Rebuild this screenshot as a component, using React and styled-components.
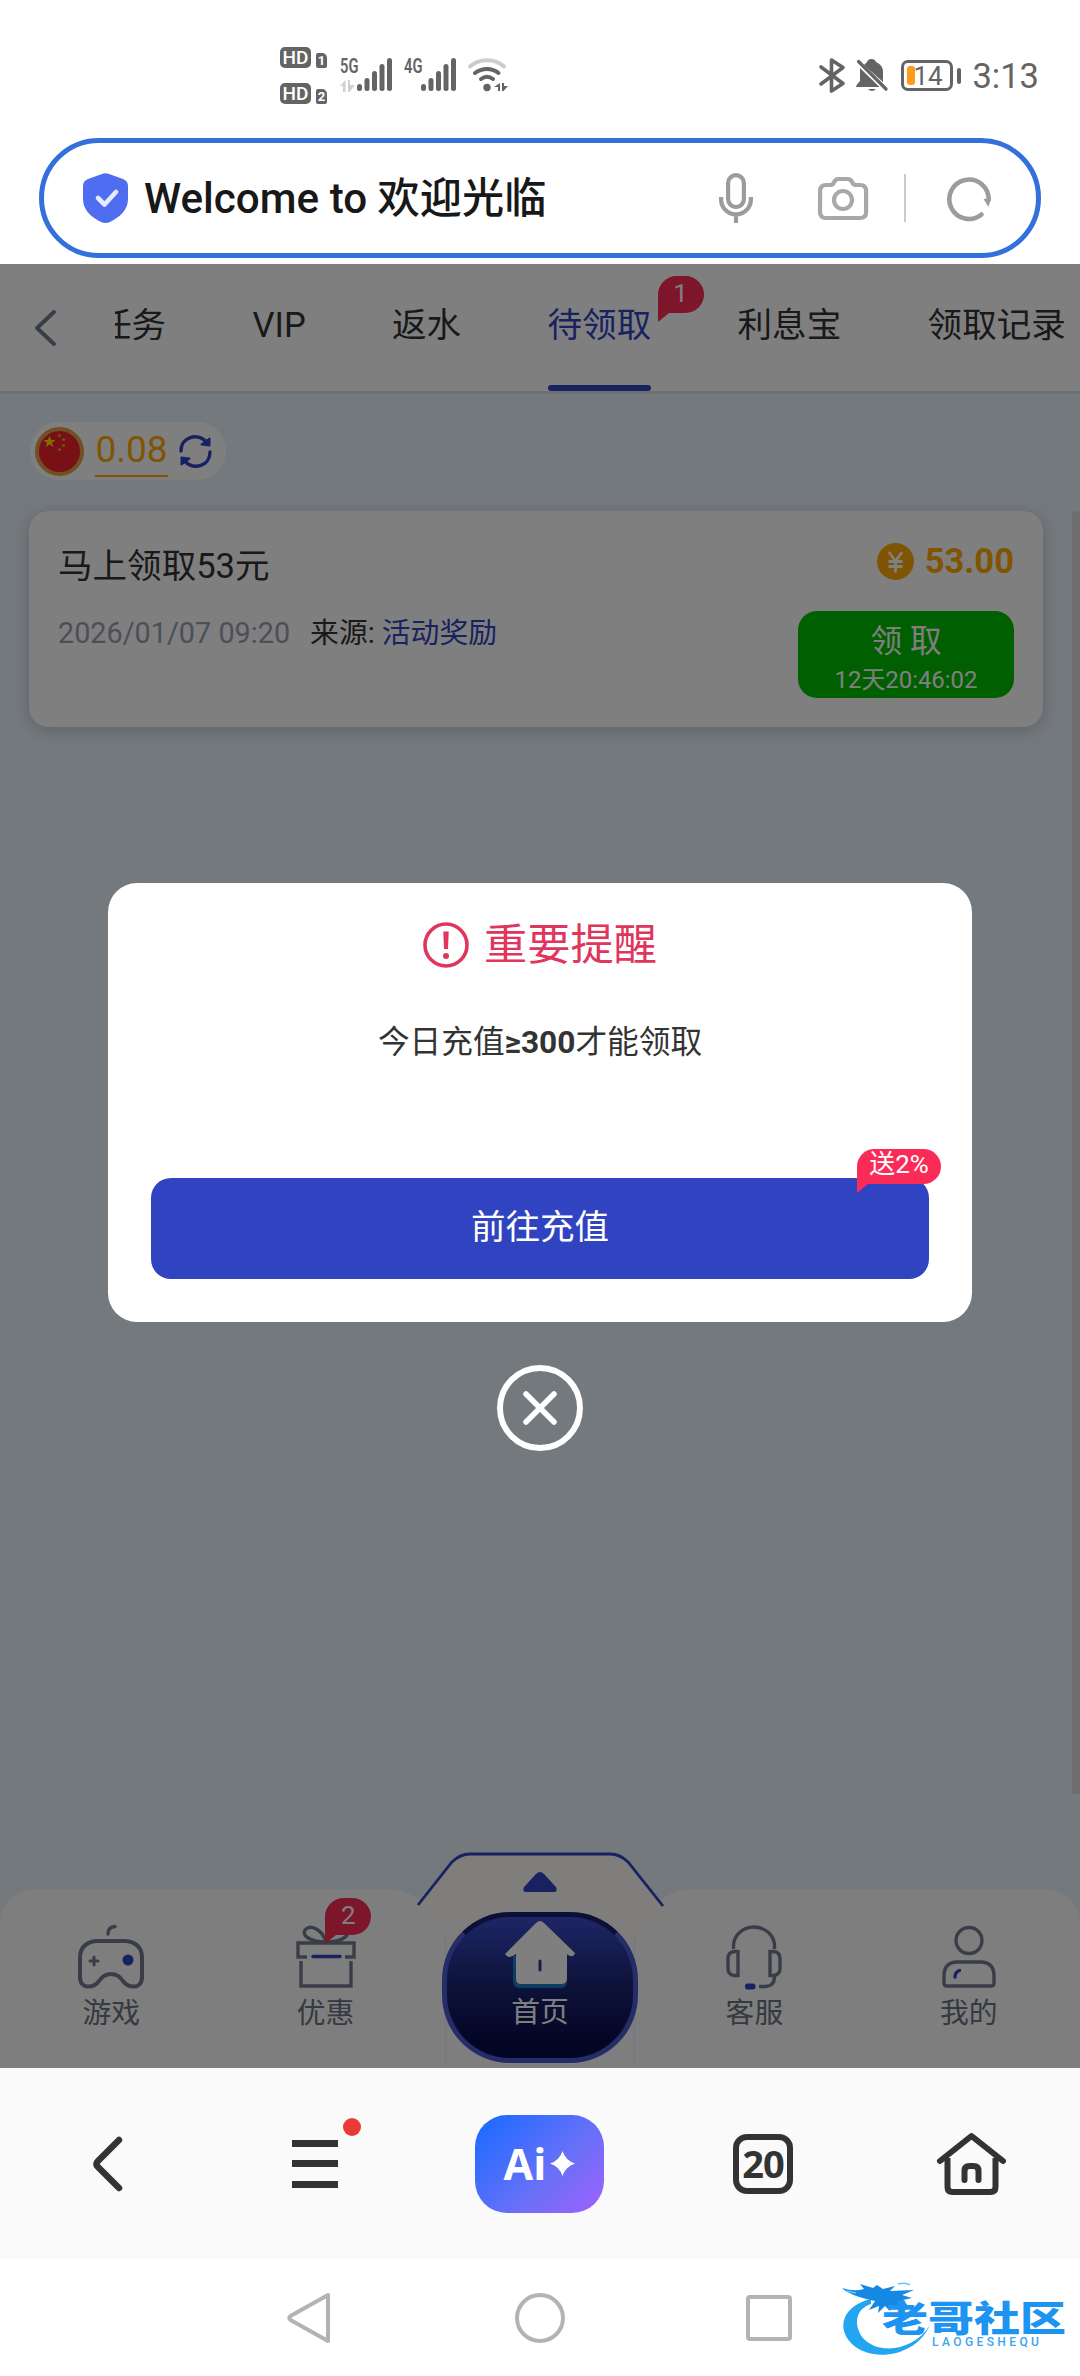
import styled, { createGlobalStyle } from 'styled-components';

const GlobalStyle = createGlobalStyle`
  * {
    box-sizing: border-box;
  }
  body {
    margin: 0;
    background: #fff;
    font-family: Roboto, 'Noto Sans CJK SC', sans-serif;
    color: #333;
  }
  svg {
    display: block;
    flex-shrink: 0;
    overflow: visible;
  }
`;

const Screen = styled.div`
  width: 1080px;
  height: 2376px;
  display: flex;
  flex-direction: column;
  overflow: hidden;
`;

/* ---------- status bar ---------- */

const StatusBar = styled.div`
  height: 138px;
  padding: 47px 41px 0 280px;
  display: flex;
  align-items: flex-start;
  color: #646464;
`;

const SimColumn = styled.div`
  display: flex;
  flex-direction: column;
  gap: 15px;
  margin-right: 13px;
`;

const SimRow = styled.div`
  display: flex;
  align-items: flex-end;
  gap: 5px;
  height: 21px;
`;

const HdTag = styled.div`
  width: 31px;
  height: 21px;
  border-radius: 5px;
  background: #646464;
  color: #fff;
  font-size: 19px;
  font-weight: 500;
  line-height: 22px;
  text-align: center;
`;

const SimTag = styled.div`
  width: 11px;
  height: 15px;
  border-radius: 2px 5px 2px 2px;
  background: #646464;
  color: #fff;
  font-size: 13px;
  font-weight: 700;
  line-height: 16px;
  text-align: center;
`;

const Signal = styled.div`
  display: flex;
  margin: 11px 12px 0 0;
`;

const SignalInfo = styled.div`
  width: 17px;
  display: flex;
  flex-direction: column;
  gap: 7px;
`;

const Network = styled.div`
  height: 15px;
  font-size: 21px;
  font-weight: 600;
  line-height: 16px;
  transform: scaleX(0.7);
  transform-origin: 0 0;
  white-space: nowrap;
`;

const StatusRight = styled.div`
  margin: 11px 0 0 auto;
  display: flex;
  align-items: center;
  height: 35px;
`;

const Battery = styled.div`
  width: 52px;
  height: 31px;
  margin-left: 13px;
  padding: 3px;
  display: flex;
  border: 3px solid #646464;
  border-radius: 7px;
`;

const BatteryLevel = styled.div`
  width: 8px;
  height: 19px;
  border-radius: 3px;
  background: #ff9a1c;
`;

const BatteryText = styled.div`
  margin-left: -2px;
  font-size: 26px;
  line-height: 20px;
`;

const BatteryCap = styled.div`
  width: 4px;
  height: 16px;
  margin-left: 4px;
  border-radius: 2px;
  background: #646464;
`;

const Clock = styled.div`
  margin-left: 11px;
  font-size: 34.5px;
  line-height: 38px;
`;

/* ---------- address bar ---------- */

const AddressBar = styled.div`
  height: 120px;
  margin: 0 39px 6px;
  padding: 0 45px 0 39px;
  display: flex;
  align-items: center;
  border: 5px solid #3470dc;
  border-radius: 60px;
`;

const PageTitle = styled.div`
  margin-left: 16px;
  flex: 1;
  font-size: 42.2px;
  font-weight: 500;
  line-height: 60px;
  padding-top: 2px;
  color: #181818;
  white-space: nowrap;
`;

const Divider = styled.div`
  width: 2px;
  height: 48px;
  margin: 0 41px 0 36px;
  background: #ccc;
`;

/* ---------- web page ---------- */

const Page = styled.div`
  position: relative;
  height: 1804px;
  display: flex;
  flex-direction: column;
  background: #e9f2fa;
  overflow: hidden;
`;

const TabHeader = styled.div`
  height: 130px;
  padding-left: 35px;
  display: flex;
  align-items: flex-start;
  background: #fff;
  border-bottom: 3px solid #dcdee0;
`;

const BackArrow = styled.svg`
  margin-top: 46px;
`;

const TabScroller = styled.div`
  flex: 1;
  height: 127px;
  margin-left: 59px;
  display: flex;
  gap: 86.4px;
  overflow: hidden;
`;

const Tab = styled.div`
  position: relative;
  height: 127px;
  flex-shrink: 0;
  font-size: 34.56px;
  line-height: 122px;
  color: ${({ $active }) => ($active ? '#3044c1' : '#333')};
  border-bottom: 6px solid transparent;

  &:first-child {
    margin-left: -18px;
  }

  ${({ $active }) =>
    $active &&
    `&::after {
      content: '';
      position: absolute;
      left: 0;
      right: 0;
      bottom: -6px;
      height: 6px;
      border-radius: 3px;
      background: #3044c1;
    }`}
`;

const Bubble = styled.div`
  position: absolute;
  left: ${({ $left }) => $left}px;
  top: ${({ $top }) => $top}px;
  width: ${({ $width }) => $width || 46}px;
  height: ${({ $height }) => $height || 37}px;
  border-radius: 19px 19px 19px 0;
  background: #fa2c57;
  color: #fff;
  font-size: 25.9px;
  line-height: ${({ $height }) => ($height ? $height - 4 : 35)}px;
  text-align: center;
  white-space: nowrap;

  &::after {
    content: '';
    position: absolute;
    left: 0;
    top: 100%;
    border-top: 9px solid #fa2c57;
    border-right: 11px solid transparent;
  }
`;

const Balance = styled.div`
  width: 196px;
  height: 58px;
  margin: 28px 0 0 30px;
  padding-left: 5px;
  display: flex;
  align-items: center;
  border-radius: 29px;
  background: #fff;
`;

const Amount = styled.div`
  width: 73px;
  height: 52px;
  margin: 0 11px 0 11px;
  padding-bottom: 2px;
  font-size: 37px;
  line-height: 49px;
  text-align: center;
  color: #ffaa09;
  border-bottom: 2px solid #ffaa09;
`;

const Content = styled.div`
  display: flex;
  align-items: flex-start;
  margin-top: 31px;
  padding-left: 29px;
`;

const RewardCard = styled.div`
  width: 1014px;
  height: 216px;
  padding: 0 29px;
  display: flex;
  justify-content: space-between;
  border-radius: 20px;
  background: #fff;
  box-shadow: 0 4px 16px rgba(90, 100, 130, 0.3);
`;

const RewardTitle = styled.div`
  margin-top: 30px;
  font-size: 34.56px;
  line-height: 50px;
`;

const RewardMeta = styled.div`
  margin-top: 21px;
  display: flex;
  font-size: 28.8px;
  line-height: 42px;
  white-space: pre;
`;

const MetaDate = styled.span`
  margin-right: 20px;
  color: #999fae;
`;

const MetaLink = styled.span`
  color: #3044c1;
`;

const RewardSide = styled.div`
  display: flex;
  flex-direction: column;
  align-items: flex-end;
`;

const Price = styled.div`
  height: 50px;
  margin-top: 25px;
  display: flex;
  align-items: center;
  gap: 11px;
  font-size: 34.56px;
  font-weight: 700;
  color: #ffaa09;
`;

const ClaimButton = styled.div`
  width: 216px;
  height: 87px;
  margin-top: 25px;
  padding-top: 8px;
  display: flex;
  flex-direction: column;
  align-items: center;
  border-radius: 19px;
  background: #00bf00;
  color: #fff;
  font-size: 31.68px;
  line-height: 46px;
`;

const Countdown = styled.div`
  font-size: 23.9px;
  line-height: 30px;
`;

const ScrollThumb = styled.div`
  width: 8px;
  height: 1283px;
  margin: 0 0 -1283px auto;
  border-radius: 4px 4px 0 0;
  background: #dcdcdc;
`;

/* ---------- site bottom menu ---------- */

const BottomMenu = styled.div`
  position: relative;
  height: 179px;
  margin-top: auto;
  display: flex;
  justify-content: space-between;
`;

const MenuSide = styled.div`
  position: relative;
  width: 445px;
  height: 179px;
  padding: ${({ $right }) => ($right ? '0 4px 0 0' : '0 0 0 4px')};
  display: flex;
  justify-content: ${({ $right }) => ($right ? 'flex-end' : 'flex-start')};
  border-radius: ${({ $right }) => ($right ? '60px 36px 0 0' : '36px 60px 0 0')};
  background: #fdfdff;
`;

const MenuItem = styled.div`
  position: relative;
  width: 214.4px;
  padding-top: 36px;
  display: flex;
  flex-direction: column;
  align-items: center;
  gap: 3px;
  font-size: 28.8px;
  line-height: 42px;
  color: #6b7280;
`;

const HoodArt = styled.svg`
  position: absolute;
  left: 418px;
  top: -37px;
  z-index: 1;
`;

const HomeButton = styled.div`
  position: relative;
  width: 196px;
  height: 151px;
  margin: 23px -10px 0;
  padding-top: 3px;
  display: flex;
  flex-direction: column;
  align-items: center;
  gap: 5px;
  z-index: 1;
  border: 5px solid #4a58d0;
  border-top-color: #18206c;
  border-radius: 68px;
  background: linear-gradient(#3b4cce, #1d2878 45%, #060a48 90%);
  color: #fff;
  font-size: 28.8px;
  line-height: 42px;
`;

/* ---------- dialog ---------- */

const Overlay = styled.div`
  position: absolute;
  inset: 0;
  z-index: 2;
  padding-top: 619px;
  display: flex;
  flex-direction: column;
  align-items: center;
  background: rgba(0, 0, 0, 0.5);
`;

const Dialog = styled.div`
  width: 864px;
  height: 439px;
  padding: 0 43px;
  display: flex;
  flex-direction: column;
  align-items: center;
  border-radius: 29px;
  background: #fff;
`;

const DialogTitle = styled.div`
  height: 60px;
  margin-top: 32px;
  display: flex;
  align-items: center;
  gap: 15px;
  font-size: 43.2px;
  line-height: 60px;
  color: #e0355c;

  span {
    padding-top: 2px;
  }
`;

const DialogText = styled.div`
  margin-top: 45px;
  font-size: 31.68px;
  line-height: 46px;
`;

const DialogButton = styled.div`
  position: relative;
  width: 778px;
  height: 101px;
  margin-top: 112px;
  border-radius: 20px;
  background: #3044c1;
  color: #fff;
  font-size: 34.56px;
  line-height: 98px;
  text-align: center;
`;

const CloseButton = styled.div`
  width: 86px;
  height: 86px;
  margin-top: 43px;
  display: flex;
  align-items: center;
  justify-content: center;
  border: 6px solid #fff;
  border-radius: 50%;
`;

/* ---------- browser toolbar and system navigation ---------- */

const Toolbar = styled.div`
  height: 191px;
  padding: 0 74px 0 93px;
  display: flex;
  align-items: center;
  background: #fafafa;
`;

const MenuLines = styled.div`
  position: relative;
  width: 46px;
  height: 48px;
  margin-left: 170px;
  display: flex;
  flex-direction: column;
  justify-content: space-between;

  i {
    height: 7px;
    background: #333;
  }

  &::after {
    content: '';
    position: absolute;
    left: 51px;
    top: -22px;
    width: 18px;
    height: 18px;
    border-radius: 50%;
    background: #e93b35;
  }
`;

const AiButton = styled.div`
  width: 129px;
  height: 98px;
  margin-left: 137px;
  display: flex;
  align-items: center;
  justify-content: center;
  gap: 4px;
  border-radius: 32px;
  background: linear-gradient(135deg, #246bff 10%, #6a70f8 60%, #a060ff);
  color: #fff;
  font-family: 'Open Sans', sans-serif;
  font-size: 43px;
  font-weight: 700;
`;

const TabCount = styled.div`
  width: 60px;
  height: 60px;
  margin-left: 129px;
  border: 6px solid #333;
  border-radius: 14px;
  color: #333;
  font-family: 'Open Sans', sans-serif;
  font-size: 38px;
  font-weight: 700;
  line-height: 47px;
  text-align: center;
  letter-spacing: -1px;
`;

const SystemNav = styled.div`
  height: 117px;
  padding-left: 287px;
  display: flex;
  align-items: center;
`;

const Brand = styled.div`
  margin: 5px 0 0 50px;
  display: flex;
  align-items: flex-start;
`;

const BrandText = styled.div`
  position: relative;
  margin: 23px 0 0 -48px;
  display: flex;
  flex-direction: column;
`;

const BrandName = styled.div`
  height: 31px;
  font-size: 46px;
  font-weight: 900;
  line-height: 40px;
  color: #1d93f2;
  transform: scaleY(0.78);
  transform-origin: 0 0;
  white-space: nowrap;
`;

const BrandLatin = styled.div`
  margin: 1px 0 0 50px;
  font-size: 12px;
  font-weight: 500;
  line-height: 12px;
  letter-spacing: 3.4px;
  color: #3ba5f0;
`;

const SignalBars = () => (
  <svg width='35' height='33' viewBox='0 0 35 33' fill='#646464'>
    <rect x='0' y='26' width='5' height='7' rx='2.5' />
    <rect x='7.5' y='20' width='5' height='13' rx='2.5' />
    <rect x='15' y='13' width='5' height='20' rx='2.5' />
    <rect x='22.5' y='6' width='5' height='27' rx='2.5' />
    <rect x='30' y='0' width='5' height='33' rx='2.5' />
  </svg>
);

const DataArrows = () => (
  <svg width='15' height='12' viewBox='0 0 15 12' fill='#d0d0d0'>
    <path d='M5.5 0v12H3V6H0zM8 0h2v5h5L9.5 12H8z' />
  </svg>
);

const WifiIcon = () => (
  <svg width='40' height='34' viewBox='0 0 40 34' fill='none' stroke='#646464' strokeWidth='4' strokeLinecap='round'>
    <path d='M2 8.500C11 0 27 0 36 8.500' stroke='#ccc' />
    <path d='M7 15C14 9.500 24 9.500 30.500 15' />
    <path d='M13 21C17 18 21 18 25 21' />
    <circle cx='19' cy='29.500' r='3.700' fill='#646464' stroke='none' />
    <path d='M32 25v8h-2v-4h-4zM34 25h2v3h4l-4.500 5H34z' fill='#646464' stroke='none' />
  </svg>
);

const BluetoothIcon = () => (
  <svg width='26' height='35' viewBox='0 0 26 35' fill='none' stroke='#646464' strokeWidth='3.600' strokeLinejoin='round' strokeLinecap='round'>
    <path d='M2 9L24 25.500 12.500 33V2L24 9.500 2 26' />
  </svg>
);

const MutedBellIcon = () => (
  <svg width='32' height='33' viewBox='0 0 32 33' fill='#646464' style={{ marginLeft: 11 }}>
    <path d='M8 6 L11 3 Q12 0 15.500 0 Q19 0 20 3 Q27 6 27 13 L27 23 Z' />
    <path d='M4 9 L23.500 28 L0 28 Q0 26 4 22 Z' />
    <path d='M12 30h8q-4 4-8 0z' />
    <path d='M2.500 2.500L30 30' stroke='#646464' strokeWidth='3.200' strokeLinecap='round' />
  </svg>
);

const ShieldIcon = () => (
  <svg width='45' height='50' viewBox='0 0 45 50'>
    <path
      d='M19 1q3.500-1.500 7 0l14 5q5 2 5 7v13c0 11-8 18-18 23q-4.500 2-9 0C8 44 0 37 0 26V13q0-5 5-7z'
      fill='#4f6df0'
    />
    <path d='M15 25l6.500 6.500L33 19' fill='none' stroke='#e6ebff' strokeWidth='4.600' strokeLinecap='round' strokeLinejoin='round' />
  </svg>
);

const MicIcon = () => (
  <svg width='34' height='50' viewBox='0 0 34 50' fill='none' stroke='#9c9c9c' strokeWidth='4.200'>
    <rect x='9.100' y='2.100' width='15.800' height='32' rx='7.900' />
    <path d='M2.100 24v2.500a14.900 14.900 0 0 0 29.800 0V24M17 41v9' />
  </svg>
);

const CameraIcon = () => (
  <svg width='50' height='43' viewBox='0 0 50 43' fill='none' stroke='#a8a8a8' strokeWidth='4.200' style={{ marginLeft: 65 }}>
    <path d='M2.100 14q0-6 6-6h4q2.500 0 3.500-2 1.500-4 5-4h9q3.500 0 5 4 1 2 3.500 2h4q6 0 6 6v21q0 6-6 6H8q-6 0-6-6z' />
    <circle cx='25' cy='23' r='9' />
  </svg>
);

const ReloadIcon = () => (
  <svg width='44' height='44' viewBox='0 0 44 44' fill='none' stroke='#9c9c9c' strokeWidth='4.600'>
    <path d='M34.500 38.500A19.700 19.700 0 1 1 41.700 24' strokeLinecap='round' />
    <path d='M36.500 23l7.500-1-2.500 9z' fill='#9c9c9c' stroke='none' />
  </svg>
);

const FlagIcon = () => (
  <svg width='49' height='49' viewBox='0 0 49 49'>
    <circle cx='24.500' cy='24.500' r='22.500' fill='#f0202a' stroke='#e0a048' strokeWidth='4' />
    <path d='M14.500 9l1.700 4h4.300l-3.500 2.700 1.400 4.300-3.900-2.600-3.900 2.600 1.400-4.300L8.500 13h4.300z' fill='#ffde00' />
    <g fill='#e8a020'>
      <circle cx='24.500' cy='8.500' r='1.600' />
      <circle cx='28.500' cy='12.500' r='1.600' />
      <circle cx='28.500' cy='18.500' r='1.600' />
      <circle cx='24.500' cy='22.500' r='1.600' />
    </g>
  </svg>
);

const RefreshIcon = () => (
  <svg width='33' height='33' viewBox='0 0 33 33' fill='none' stroke='#3044c1' strokeWidth='3.400' strokeLinecap='round' strokeLinejoin='round'>
    <path d='M2 16C2 2 18-3 28 7.500M31 17C31 31 15 36 5 25.500' />
    <path d='M30.500 3.500V10.500l-8-1zM2.500 29.500V22.500l8 1z' fill='#3044c1' strokeWidth='2' />
  </svg>
);

const CoinIcon = () => (
  <svg width='37' height='37' viewBox='0 0 37 37'>
    <circle cx='18.500' cy='18.500' r='18.500' fill='#ffaa09' />
    <path d='M12.500 10l6 8 6-8M12.500 18.500h12M12.500 23.500h12M18.500 18v10.500' fill='none' stroke='#fff' strokeWidth='2.800' strokeLinecap='round' />
  </svg>
);

const AlertIcon = () => (
  <svg width='46' height='46' viewBox='0 0 46 46'>
    <circle cx='23' cy='23' r='21' fill='none' stroke='#e0355c' strokeWidth='3.600' />
    <path d='M20.300 9.500h5.400L25 27h-4z' fill='#e0355c' />
    <circle cx='23' cy='34' r='3' fill='#e0355c' />
  </svg>
);

const GamepadIcon = () => (
  <svg width='66' height='64' viewBox='0 0 66 64' fill='none' stroke='#737b8f' strokeWidth='4' strokeLinecap='round'>
    <path d='M30 9q0-7 7-7.500' strokeWidth='3.400' />
    <path d='M18 16h30q16 2 16 17v19c0 13-14 11-19 4-4-6-8-7-12-7s-8 1-12 7c-5 7-19 9-19-4V33q0-15 16-17z' />
    <path d='M16 32v8M12 36h8' strokeWidth='3' />
    <circle cx='50' cy='35' r='5.500' fill='#3044c1' stroke='none' />
  </svg>
);

const GiftIcon = () => (
  <svg width='60' height='64' viewBox='0 0 60 64' fill='none' stroke='#737b8f' strokeWidth='3.400'>
    <path d='M30 17C27 6 16-1 10 4c-6 6 4 13 20 13zM30 17C33 6 44-1 50 4c6 6-4 13-20 13z' />
    <path d='M11 32H2V18h56v14h-9M5 36v25h50V36' />
    <path d='M17 31.500h27' stroke='#3044c1' strokeLinecap='round' />
  </svg>
);

const HeadsetIcon = () => (
  <svg width='56' height='64' viewBox='0 0 56 64' fill='none' stroke='#737b8f' strokeWidth='3.400'>
    <path d='M7.500 24v-3a20.500 19 0 0 1 41 0v3' />
    <path d='M12 26.500v24H8q-6-1-6-7v-10q0-6 6-7zM44 26.500v24h4q6-1 6-7v-10q0-6-6-7z' />
    <path d='M48.500 50v2q0 9-9 9.500H33' />
    <rect x='19' y='58.500' width='10.500' height='6' rx='2.500' fill='#3044c1' stroke='none' />
  </svg>
);

const ProfileIcon = () => (
  <svg width='54' height='64' viewBox='0 0 54 64' fill='none' stroke='#737b8f' strokeWidth='3.400'>
    <circle cx='27' cy='15.500' r='13' />
    <path d='M14 37h26q12 1 12 14v7q0 3-3 3H5q-3 0-3-3v-7q0-13 12-14z' />
    <path d='M13 52q0-5 4.500-6.500' stroke='#3044c1' strokeLinecap='round' />
  </svg>
);

const HouseIcon = () => (
  <svg width='70' height='66' viewBox='0 0 70 66'>
    <path d='M8 36v25q0 7 7 7h41q6 0 6-7V36l5-1z' fill='#1f8fd6' opacity='0.8' />
    <path d='M31 3q4-4 8 0l31 30q-2 6-8 1v24q0 6-6 6H16q-5 0-5-5V34q-8 6-11 0z' fill='#fff' />
    <path d='M35 41v9' stroke='#2c3c9c' strokeWidth='3' strokeLinecap='round' />
  </svg>
);

const Hood = () => (
  <HoodArt width='244' height='216' viewBox='0 0 244 216'>
    <path d='M28 130h188v86H28z' fill='#fdfdff' />
    <path d='M0 52L34 10Q42 2 52 2H192Q202 2 210 10L244 52 216 86V130H28V86z' fill='#fffdf8' />
    <path d='M0 53L34 10Q42 2 52 2H192Q202 2 210 10L245 54' fill='none' stroke='#3044c1' strokeWidth='2.800' />
    <path d='M118 22q4-4 8 0l12 13q2 5-2 5h-28q-4 0-2-5z' fill='#3044c1' />
  </HoodArt>
);

const Dragon = () => (
  <svg width='88' height='78' viewBox='0 0 88 78'>
    <path d='M29 18C2 24-7 46 10 63c20 19 64 13 78-19C72 70 36 75 20 56 11 42 14 28 29 23z' fill='#22a6f2' />
    <path d='M0 7q12 4 22 1L18 3l13 4 4-3 6 4 12-3-5 5 24-1-12 5 10 3-9 2 6 7-10-4 1 7-8-5-2 6-5-5-7 7 1-7-10 4 6-9Q8 15 0 7z' fill='#1588e4' />
    <path d='M4 10l10 2M56 3q8-2 12 1' fill='none' stroke='#6cc4fa' strokeWidth='1.500' />
  </svg>
);

const App = () => {
  return (
    <Screen>
      <GlobalStyle />

      <StatusBar>
        <SimColumn>
          <SimRow>
            <HdTag>HD</HdTag>
            <SimTag>1</SimTag>
          </SimRow>
          <SimRow>
            <HdTag>HD</HdTag>
            <SimTag>2</SimTag>
          </SimRow>
        </SimColumn>
        <Signal>
          <SignalInfo>
            <Network>5G</Network>
            <DataArrows />
          </SignalInfo>
          <SignalBars />
        </Signal>
        <Signal>
          <SignalInfo>
            <Network>4G</Network>
          </SignalInfo>
          <SignalBars />
        </Signal>
        <Signal>
          <WifiIcon />
        </Signal>
        <StatusRight>
          <BluetoothIcon />
          <MutedBellIcon />
          <Battery>
            <BatteryLevel />
            <BatteryText>14</BatteryText>
          </Battery>
          <BatteryCap />
          <Clock>3:13</Clock>
        </StatusRight>
      </StatusBar>

      <AddressBar>
        <ShieldIcon />
        <PageTitle>Welcome to 欢迎光临</PageTitle>
        <MicIcon />
        <CameraIcon />
        <Divider />
        <ReloadIcon />
      </AddressBar>

      <Page>
        <TabHeader>
          <BackArrow width='21' height='36' viewBox='0 0 21 36' fill='none' stroke='#737b8f' strokeWidth='4' strokeLinecap='round' strokeLinejoin='round'>
            <path d='M19 2L2 18l17 16' />
          </BackArrow>
          <TabScroller>
            <Tab>任务</Tab>
            <Tab>VIP</Tab>
            <Tab>返水</Tab>
            <Tab $active>
              待领取
              <Bubble $left={110} $top={12}>1</Bubble>
            </Tab>
            <Tab>利息宝</Tab>
            <Tab>领取记录</Tab>
          </TabScroller>
        </TabHeader>

        <Balance>
          <FlagIcon />
          <Amount>0.08</Amount>
          <RefreshIcon />
        </Balance>

        <Content>
          <RewardCard>
            <div>
              <RewardTitle>马上领取53元</RewardTitle>
              <RewardMeta>
                <MetaDate>2026/01/07 09:20</MetaDate>
                来源: <MetaLink>活动奖励</MetaLink>
              </RewardMeta>
            </div>
            <RewardSide>
              <Price>
                <CoinIcon />
                53.00
              </Price>
              <ClaimButton>
                领 取
                <Countdown>12天20:46:02</Countdown>
              </ClaimButton>
            </RewardSide>
          </RewardCard>
          <ScrollThumb />
        </Content>

        <BottomMenu>
          <Hood />
          <MenuSide>
            <MenuItem>
              <GamepadIcon />
              游戏
            </MenuItem>
            <MenuItem>
              <GiftIcon />
              优惠
              <Bubble $left={107} $top={9}>2</Bubble>
            </MenuItem>
          </MenuSide>
          <HomeButton>
            <HouseIcon />
            首页
          </HomeButton>
          <MenuSide $right>
            <MenuItem>
              <HeadsetIcon />
              客服
            </MenuItem>
            <MenuItem>
              <ProfileIcon />
              我的
            </MenuItem>
          </MenuSide>
        </BottomMenu>

        <Overlay>
          <Dialog>
            <DialogTitle>
              <AlertIcon />
              <span>重要提醒</span>
            </DialogTitle>
            <DialogText>
              今日充值<b>≥300</b>才能领取
            </DialogText>
            <DialogButton>
              前往充值
              <Bubble $left={706} $top={-29} $width={84} $height={35}>送2%</Bubble>
            </DialogButton>
          </Dialog>
          <CloseButton>
            <svg width='34' height='34' viewBox='0 0 34 34' stroke='#fff' strokeWidth='5.500' strokeLinecap='round'>
              <path d='M3 3l28 28M31 3L3 31' />
            </svg>
          </CloseButton>
        </Overlay>
      </Page>

      <Toolbar>
        <svg width='29' height='54' viewBox='0 0 29 54' fill='none' stroke='#333' strokeWidth='6.500' strokeLinecap='round'>
          <path d='M26 3L5 24q-3 3 0 6l21 21' />
        </svg>
        <MenuLines>
          <i />
          <i />
          <i />
        </MenuLines>
        <AiButton>
          Ai
          <svg width='25' height='25' viewBox='0 0 25 25' fill='#fff'>
            <path d='M12.500 0q3 9.500 12.500 12.500-9.500 3-12.500 12.500Q9.500 15.500 0 12.500 9.500 9.500 12.500 0z' />
          </svg>
        </AiButton>
        <TabCount>20</TabCount>
        <svg width='69' height='62' viewBox='0 0 69 62' fill='none' stroke='#333' strokeWidth='6' strokeLinecap='round' style={{ marginLeft: 144 }}>
          <path d='M3 28L34.500 3 66 28' strokeLinejoin='round' />
          <path d='M10.500 25v29q0 5 5 5h38q5 0 5-5V25' strokeLinecap='butt' />
          <path d='M27.500 47V38q0-5 5-5h4q5 0 5 5v9' />
        </svg>
      </Toolbar>

      <SystemNav>
        <svg width='43' height='50' viewBox='0 0 43 50' fill='none' stroke='#b3b3b3' strokeWidth='4' strokeLinejoin='round'>
          <path d='M41 2v46L3.500 27q-2.500-2 0-4z' />
        </svg>
        <svg width='50' height='50' viewBox='0 0 50 50' fill='none' stroke='#b3b3b3' strokeWidth='4' style={{ marginLeft: 185 }}>
          <circle cx='25' cy='25' r='23' />
        </svg>
        <svg width='46' height='46' viewBox='0 0 46 46' fill='none' stroke='#b3b3b3' strokeWidth='4' style={{ marginLeft: 181 }}>
          <rect x='2' y='2' width='42' height='42' rx='2' />
        </svg>
        <Brand>
          <Dragon />
          <BrandText>
            <BrandName>老哥社区</BrandName>
            <BrandLatin>LAOGESHEQU</BrandLatin>
          </BrandText>
        </Brand>
      </SystemNav>
    </Screen>
  );
};

export default App;
